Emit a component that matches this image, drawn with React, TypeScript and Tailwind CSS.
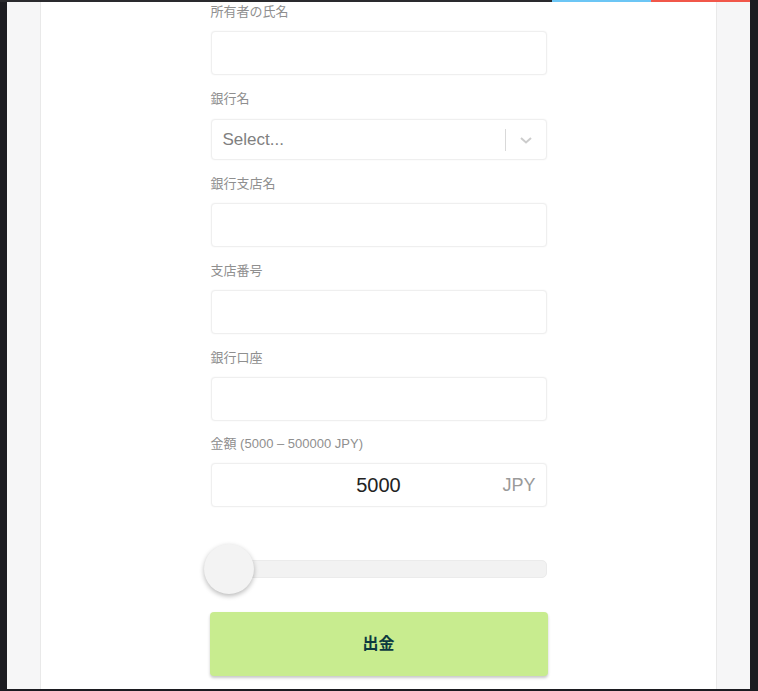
const fields = [
  { label: '所有者の氏名' },
  { label: '銀行名', select: true },
  { label: '銀行支店名' },
  { label: '支店番号' },
  { label: '銀行口座' },
]

function Label({ children }: { children: React.ReactNode }) {
  return <p className="h-5 text-[13px] leading-5 text-[#8f8f8f]">{children}</p>
}

function TextField() {
  return (
    <div className="mt-[9px] h-[44px] rounded-[4px] border border-[#efefef] bg-white shadow-[0_0_2px_rgba(0,0,0,0.06)]" />
  )
}

function SelectField() {
  return (
    <div className="mt-[10px] flex h-[41px] items-center rounded-[4px] border border-[#efefef] bg-white shadow-[0_0_2px_rgba(0,0,0,0.06)]">
      <span className="flex-1 pl-[11px] text-[17px] text-[#808080]">Select...</span>
      <span className="h-[22px] w-px bg-[#d9d9d9]" />
      <span className="flex w-[40px] justify-center">
        <svg width="14" height="10" viewBox="0 0 14 10" fill="none">
          <path d="M2 3l5 4.5L12 3" stroke="#cccccc" strokeWidth="2" />
        </svg>
      </span>
    </div>
  )
}

export default function App() {
  return (
    <div className="flex h-[691px] w-[758px] flex-col bg-[#1c1c21] font-['Liberation_Sans','Noto_Sans_CJK_JP',sans-serif]">
      <div className="flex h-[2px]">
        <div className="w-[552px] bg-[#2a2a2e]" />
        <div className="w-[99px] bg-[#6cc6f5]" />
        <div className="w-[99px] bg-[#f1574a]" />
      </div>

      <div className="flex flex-1">
        <div className="w-[7px]" />
        <div className="w-[33px] bg-[#f6f6f7]" />
        <main className="flex-1 border-x border-[#e9e9e9] bg-white">
          <div className="mx-auto w-[336px]">
            {fields.map((field, i) => (
              <div key={field.label} className={i === 0 ? '' : 'mt-[14px]'}>
                <Label>{field.label}</Label>
                {field.select ? <SelectField /> : <TextField />}
              </div>
            ))}

            <div className="mt-[13px]">
              <Label>金額 (5000 – 500000 JPY)</Label>
              <div className="relative mt-[9px] flex h-[44px] items-center justify-center rounded-[4px] border border-[#efefef] bg-white shadow-[0_0_2px_rgba(0,0,0,0.06)]">
                <span className="text-[20px] text-[#222]">5000</span>
                <span className="absolute right-[10px] text-[18px] text-[#9a9a9a]">JPY</span>
              </div>
            </div>

            <div className="relative mt-[37px] flex h-[50px] items-center">
              <div className="h-[18px] w-full rounded-[5px] border border-[#ebebeb] bg-[#f2f2f2]" />
              <div className="absolute left-[-7px] top-0 h-[50px] w-[50px] rounded-full bg-[#f3f3f3] shadow-[0_2px_5px_rgba(0,0,0,0.28)]" />
            </div>

            <button className="mt-[18px] -mx-px flex h-[64px] w-[338px] items-center justify-center rounded-[4px] bg-[#c8ec8f] text-[16px] font-bold text-[#0d3a40] shadow-[0_2px_3px_rgba(0,0,0,0.22)]">
              出金
            </button>
          </div>
        </main>
        <div className="w-[33px] bg-[#f6f6f7]" />
        <div className="w-[8px]" />
      </div>

      <div className="h-[2px]" />
    </div>
  )
}
